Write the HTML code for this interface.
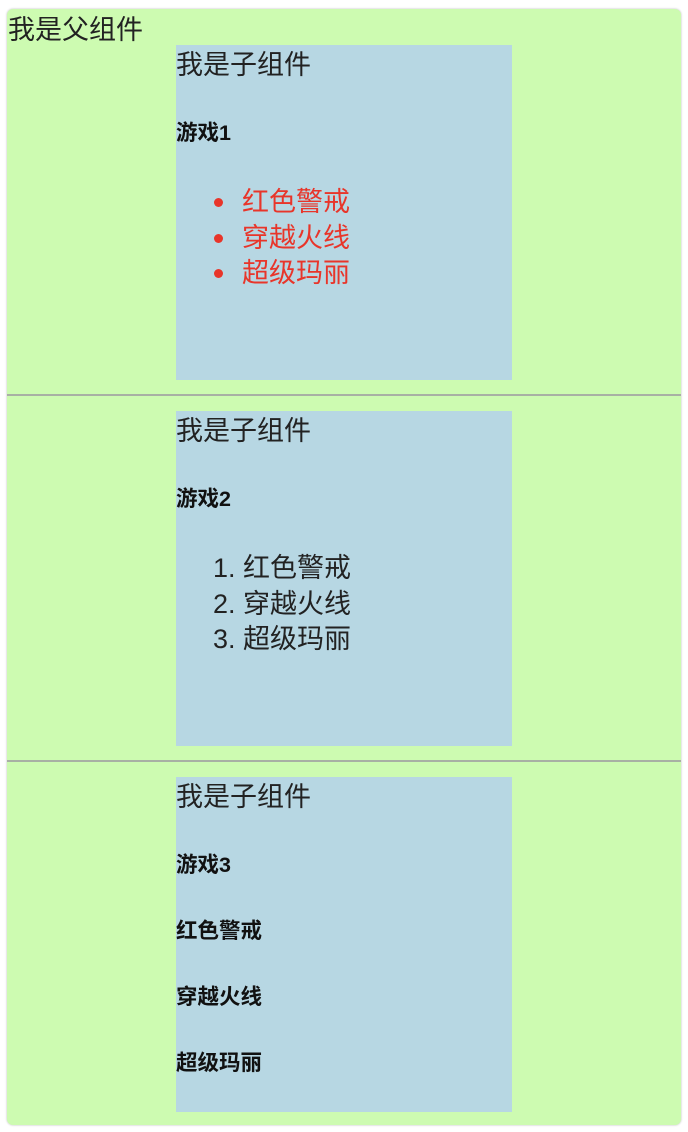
<!DOCTYPE html>
<html><head><meta charset="utf-8"><style>
html,body{margin:0;padding:0;background:#fff;width:688px;height:1132px;overflow:hidden}
body{font-family:"Liberation Sans","Noto Sans CJK SC",sans-serif;color:#222;position:relative}
.outer{position:absolute;left:7px;top:9px;width:674px;height:1116px;background:#cdfbb1;border-radius:6px;box-shadow:0 0 2px #bbb}
.t{position:absolute;white-space:nowrap;line-height:1}
.box{position:absolute;left:176px;width:336px;height:335px;background:#b7d7e3}
.hr{position:absolute;left:7px;width:674px;height:2px;background:#a8b0a4}
.big{font-size:27px}
.h4{font-size:21.5px;font-weight:bold;color:#111}
.red{color:#e8352a}
.dot{position:absolute;width:9px;height:9px;border-radius:50%;background:#e8352a}
</style></head><body>
<div class="outer"></div>
<div class="t big" style="left:8px;top:17px">我是父组件</div>

<div class="box" style="top:45px"></div>
<div class="t big" style="left:176px;top:52px">我是子组件</div>
<div class="t h4" style="left:176px;top:123px">游戏1</div>
<div class="dot" style="left:214px;top:198px"></div>
<div class="dot" style="left:214px;top:234px"></div>
<div class="dot" style="left:214px;top:269px"></div>
<div class="t big red" style="left:242px;top:189px">红色警戒</div>
<div class="t big red" style="left:242px;top:225px">穿越火线</div>
<div class="t big red" style="left:242px;top:260px">超级玛丽</div>

<div class="hr" style="top:394px"></div>

<div class="box" style="top:411px"></div>
<div class="t big" style="left:176px;top:418px">我是子组件</div>
<div class="t h4" style="left:176px;top:489px">游戏2</div>
<div class="t big" style="left:213px;top:555px">1. 红色警戒</div>
<div class="t big" style="left:213px;top:591px">2. 穿越火线</div>
<div class="t big" style="left:213px;top:626px">3. 超级玛丽</div>

<div class="hr" style="top:760px"></div>

<div class="box" style="top:777px"></div>
<div class="t big" style="left:176px;top:784px">我是子组件</div>
<div class="t h4" style="left:176px;top:855px">游戏3</div>
<div class="t h4" style="left:176px;top:921px">红色警戒</div>
<div class="t h4" style="left:176px;top:987px">穿越火线</div>
<div class="t h4" style="left:176px;top:1053px">超级玛丽</div>
</body></html>
